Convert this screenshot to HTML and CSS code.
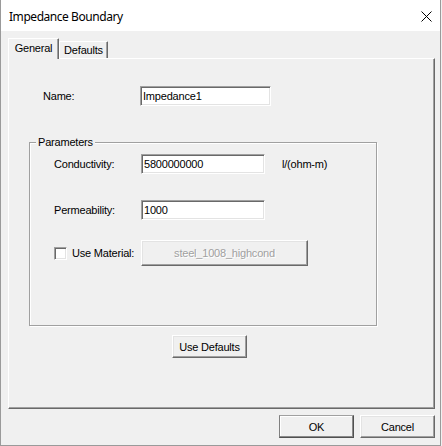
FILE: index.html
```html
<!DOCTYPE html>
<html>
<head>
<meta charset="utf-8">
<link rel="stylesheet" href="styles.css">
</head>
<body>
<div class="window">
  <div class="titlebar">
    <span class="title">Impedance Boundary</span>
    <svg class="close" width="11" height="11" viewBox="0 0 11 11">
      <line x1="0.5" y1="0.5" x2="10.5" y2="10.5" stroke="#000" stroke-width="1"/>
      <line x1="10.5" y1="0.5" x2="0.5" y2="10.5" stroke="#000" stroke-width="1"/>
    </svg>
  </div>
  <div class="content">
    <div class="tabs">
      <div class="tab active">General</div>
      <div class="tab inactive">Defaults</div>
    </div>
    <div class="panel">
      <div class="row name-row">
        <span class="name-label">Name:</span>
        <div class="textbox name-box">Impedance1</div>
      </div>
      <div class="group">
        <div class="legend">Parameters</div>
        <div class="row cond-row">
          <span class="glabel">Conductivity:</span>
          <div class="textbox gbox">5800000000</div>
          <span class="unit">l/(ohm-m)</span>
        </div>
        <div class="row perm-row">
          <span class="glabel">Permeability:</span>
          <div class="textbox gbox">1000</div>
        </div>
        <div class="row mat-row">
          <span class="glabel check-label"><span class="checkbox"></span>Use Material:</span>
          <div class="btn disabled mat-btn">steel_1008_highcond</div>
        </div>
      </div>
      <div class="btn defaults-btn">Use Defaults</div>
    </div>
    <div class="footer">
      <div class="btn ok">OK</div>
      <div class="btn cancel">Cancel</div>
    </div>
  </div>
</div>
</body>
</html>
```

FILE: styles.css
```css
html, body {
  margin: 0;
  padding: 0;
  background: #f0f0f0;
}
body {
  width: 442px;
  height: 446px;
  overflow: hidden;
  font-family: "Liberation Sans", Arial, sans-serif;
  font-size: 11px;
  letter-spacing: -0.2px;
  color: #000;
}
.window {
  width: 441px;
  height: 446px;
  box-sizing: border-box;
  border-left: 1px solid #9a9a9a;
  border-right: 1px solid #9a9a9a;
  border-bottom: 1px solid #9a9a9a;
  background: #f0f0f0;
}
.titlebar {
  height: 31px;
  background: #fff;
  display: flex;
  align-items: center;
  justify-content: space-between;
  padding: 0 8px 0 8px;
}
.title {
  font-family: "Noto Sans", "Open Sans", sans-serif;
  font-size: 12px;
  letter-spacing: -0.45px;
  color: #000;
  margin-top: 1px;
}
.close {
  display: block;
  margin-top: 1px;
}
.content {
  padding: 7px 0 0 7px;
}
.tabs {
  display: flex;
  align-items: flex-end;
  height: 21px;
  margin-bottom: -1px;
  position: relative;
  z-index: 1;
}
.tab {
  box-sizing: border-box;
  display: flex;
  align-items: center;
  justify-content: center;
  background: #f0f0f0;
  border-left: 1px solid #fff;
  border-top: 1px solid #fff;
  border-right: 1px solid #696969;
  box-shadow: inset -1px 0 0 #a0a0a0;
  border-top-right-radius: 1px;
}
.tab.active {
  width: 51px;
  height: 21px;
  padding-bottom: 2px;
}
.tab.inactive {
  width: 49px;
  height: 17px;
  margin-bottom: 1px;
}
.panel {
  width: 427px;
  height: 351px;
  box-sizing: border-box;
  border: 1px solid;
  border-color: #fff #696969 #696969 #fff;
  box-shadow: inset -1px -1px 0 #a0a0a0;
  display: flex;
  flex-direction: column;
  align-items: flex-start;
}
.row {
  display: flex;
  align-items: center;
}
.name-row {
  margin-top: 27px;
  padding-left: 34px;
  height: 20px;
}
.name-label {
  width: 97px;
}
.textbox {
  box-sizing: border-box;
  height: 20px;
  background: #fff;
  border: 1px solid;
  border-color: #a0a0a0 #fff #fff #a0a0a0;
  box-shadow: inset 1px 1px 0 #696969, inset -1px -1px 0 #e3e3e3;
  padding-left: 2px;
  display: flex;
  align-items: center;
}
.name-box {
  width: 131px;
}
.group {
  margin-top: 36px;
  margin-left: 20px;
  width: 348px;
  height: 184px;
  box-sizing: border-box;
  border: 1px solid #a0a0a0;
  box-shadow: inset 1px 1px 0 #fff, 1px 1px 0 #fff;
  display: flex;
  flex-direction: column;
  align-items: flex-start;
}
.legend {
  margin-top: -7px;
  margin-left: 6px;
  padding: 0 2px;
  height: 13px;
  line-height: 13px;
  background: #f0f0f0;
}
.cond-row {
  margin-top: 5px;
  padding-left: 24px;
  height: 20px;
}
.glabel {
  width: 87px;
  display: flex;
  align-items: center;
}
.gbox {
  width: 124px;
}
.unit {
  margin-left: 17px;
}
.perm-row {
  margin-top: 26px;
  padding-left: 24px;
  height: 20px;
}
.mat-row {
  margin-top: 20px;
  padding-left: 24px;
  height: 26px;
}
.checkbox {
  width: 13px;
  height: 13px;
  box-sizing: border-box;
  background: #fff;
  border: 1px solid;
  border-color: #a0a0a0 #fff #fff #a0a0a0;
  box-shadow: inset 1px 1px 0 #696969, inset -1px -1px 0 #e3e3e3;
  margin-right: 5px;
  flex: none;
}
.btn {
  box-sizing: border-box;
  display: flex;
  align-items: center;
  justify-content: center;
  background: #f0f0f0;
  border: 1px solid;
  border-color: #fff #696969 #696969 #fff;
  box-shadow: inset -1px -1px 0 #a0a0a0, inset 1px 1px 0 #e3e3e3;
}
.mat-btn {
  width: 167px;
  height: 26px;
}
.disabled {
  color: #a0a0a0;
  text-shadow: 1px 1px 0 #fff;
}
.defaults-btn {
  margin-top: 9px;
  margin-left: 163px;
  width: 75px;
  height: 23px;
}
.footer {
  width: 427px;
  margin-top: 6px;
  display: flex;
  justify-content: flex-end;
  gap: 6px;
}
.footer .btn {
  width: 75px;
  height: 23px;
}
.ok {
  border-color: #a0a0a0 #505050 #505050 #808080;
  box-shadow: inset -1px -1px 0 #8a8a8a, inset 1px 1px 0 #fff;
}
```
